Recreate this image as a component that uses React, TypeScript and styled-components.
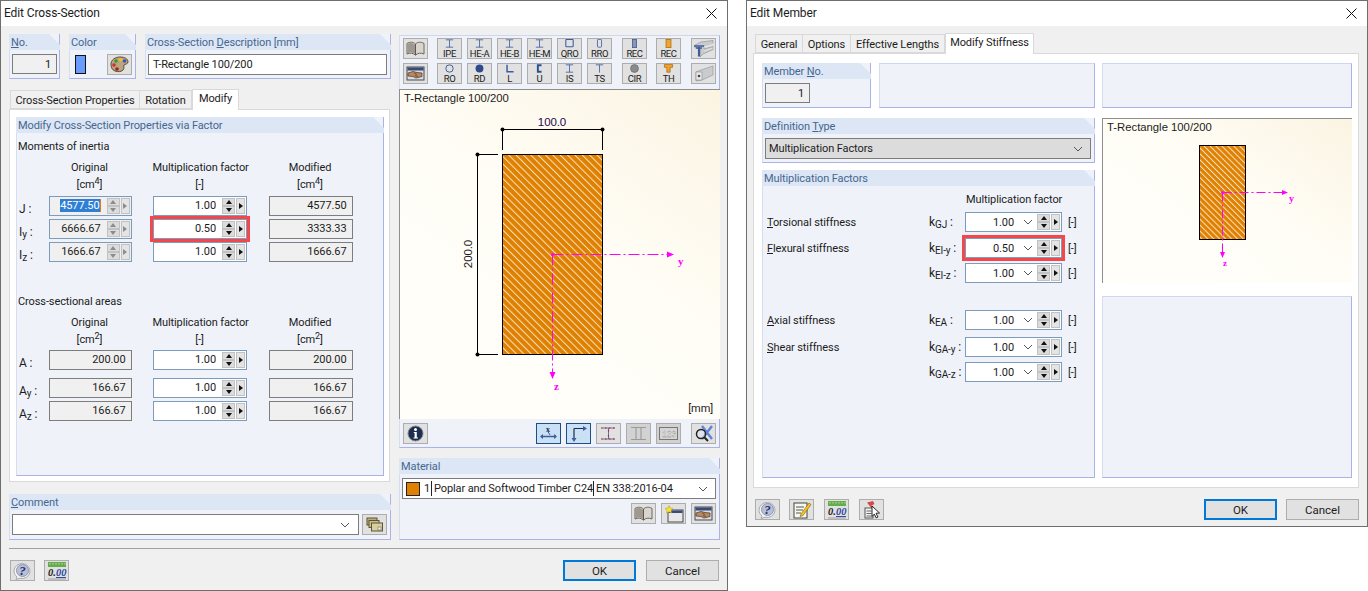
import React from 'react';
import styled, { createGlobalStyle } from 'styled-components';

const Global = createGlobalStyle`
  html, body { margin: 0; padding: 0; background: #fff; }
  * { box-sizing: border-box; }
  body { font-family: Roboto, "Liberation Sans", sans-serif; font-size: 11px; letter-spacing: -0.1px; color: #1c1c1c; }
`;

const Page = styled.div`
  display: flex;
  align-items: flex-start;
  gap: 18px;
  width: 1368px;
  height: 591px;
  overflow: hidden;
`;
const Win = styled.div<{ $w: number; $h: number }>`
  width: ${p => p.$w}px;
  height: ${p => p.$h}px;
  flex: none;
  border: 1px solid #6e6e6e;
  background: #f0f0f0;
  display: flex;
  flex-direction: column;
`;
const TitleBar = styled.div`
  height: 25px;
  flex: none;
  background: #fff;
  display: flex;
  align-items: center;
  justify-content: space-between;
  padding: 0 10px 1px 3px;
  font-size: 12px;
`;
const Body1 = styled.div`
  display: flex;
  gap: 8px;
  padding: 8px 0 0 8px;
`;
const LeftCol = styled.div`
  width: 382px;
  display: flex;
  flex-direction: column;
`;
const RightCol = styled.div`
  width: 321px;
  display: flex;
  flex-direction: column;
`;
const TopRow = styled.div`
  display: flex;
  gap: 9px;
  height: 45px;
`;
const Panel = styled.div<{ $w?: number; $h?: number; $mt?: number }>`
  ${p => (p.$w ? `width:${p.$w}px;flex:none;` : 'flex:1;')}
  ${p => (p.$h ? `height:${p.$h}px;flex:none;` : '')}
  ${p => (p.$mt ? `margin-top:${p.$mt}px;` : '')}
  display: flex;
  flex-direction: column;
  background: #eff3f9;
  border-right: 1px solid #a9b3e6;
  border-bottom: 1px solid #a9b3e6;
  border-left: 1px solid #d5deef;
`;
const BlankPanel = styled(Panel)`
  border-top: 1px solid #cdd7ee;
`;
const Head = styled.div`
  height: 16px;
  flex: none;
  margin: 0 -1px 0 -1px;
  padding: 0 0 0 2px;
  display: flex;
  align-items: center;
  background: #dce6f4;
  color: #466690;
  clip-path: polygon(0 0, calc(100% - 11px) 0, 100% 11px, 100% 100%, 0 100%);
  white-space: nowrap;
`;
const ReadBox = styled.div<{ $w: number; $h?: number; $ml?: number; $mt?: number }>`
  width: ${p => p.$w}px;
  height: ${p => p.$h ?? 20}px;
  margin: ${p => p.$mt ?? 4}px 0 0 ${p => p.$ml ?? 2}px;
  border: 1px solid #7d7d7d;
  background: #f0f0f0;
  display: flex;
  align-items: center;
  justify-content: flex-end;
  padding-right: 5px;
`;
const ColorRow = styled.div`
  display: flex;
  align-items: center;
  padding: 4px 0 0 5px;
`;
const Swatch = styled.div`
  width: 11px;
  height: 19px;
  background: #6a9bff;
  border: 1px solid #111;
`;
const IconBtn = styled.button<{ $on?: boolean; $ml?: number; $off?: boolean }>`
  width: 25px;
  height: 21px;
  flex: none;
  padding: 0;
  margin: 0 0 0 ${p => p.$ml ?? 0}px;
  border: 1px solid ${p => (p.$on ? '#1d4f85' : '#adadad')};
  background: ${p => (p.$on ? '#c9e0f5' : p.$off ? '#d2d2d2' : '#e1e1e1')};
  display: flex;
  align-items: center;
  justify-content: center;
  flex-direction: column;
  font-family: Roboto, sans-serif;
  color: #1c1c1c;
`;
const SecLabel = styled.span`
  font-size: 9.5px;
  line-height: 9px;
  letter-spacing: -0.4px;
  margin-top: 1px;
  white-space: nowrap;
`;
const TextBox = styled.div`
  height: 21px;
  margin: 4px 3px 0 2px;
  border: 1px solid #7d7d7d;
  background: #fff;
  display: flex;
  align-items: center;
  padding-left: 4px;
`;
const TabBar = styled.div<{ $pl: number; $mt: number }>`
  display: flex;
  align-items: flex-end;
  height: 20px;
  padding-left: ${p => p.$pl}px;
  margin-top: ${p => p.$mt}px;
  position: relative;
  z-index: 1;
  flex: none;
`;
const Tab = styled.div<{ $w: number; $on?: boolean }>`
  width: ${p => p.$w}px;
  height: ${p => (p.$on ? 21 : 19)}px;
  margin-bottom: ${p => (p.$on ? -1 : 0)}px;
  display: flex;
  align-items: center;
  justify-content: center;
  border: 1px solid #d9d9d9;
  border-bottom: ${p => (p.$on ? 'none' : '1px solid #d9d9d9')};
  border-left: ${p => (p.$on ? '1px solid #d9d9d9' : 'none')};
  background: ${p => (p.$on ? '#fff' : '#f0f0f0')};
  padding: ${p => (p.$on ? '0 0 3px' : '1px 0 0')};
  white-space: nowrap;
  &:first-child { border-left: 1px solid #d9d9d9; }
`;
const TabPage = styled.div<{ $h: number; $w?: number }>`
  height: ${p => p.$h}px;
  ${p => (p.$w ? `width:${p.$w}px;` : '')}
  background: #fff;
  border: 1px solid #d9d9d9;
  flex: none;
`;
const InnerPad1 = styled.div`
  padding: 7px 5px 0 6px;
  height: 100%;
`;
const SectionTitle = styled.div<{ $mt: number }>`
  margin: ${p => p.$mt}px 0 0 1px;
  height: 14px;
  line-height: 14px;
`;
const ColHeads = styled.div<{ $mt: number }>`
  display: grid;
  grid-template-columns: 83px 94px 84px;
  column-gap: 21.5px;
  padding-left: 31px;
  margin-top: ${p => p.$mt}px;
  text-align: center;
  line-height: 16.5px;
`;
const HeadCell = styled.div`
  white-space: nowrap;
`;
const Sup = styled.sup`
  font-size: 9px;
  line-height: 0;
  vertical-align: 4px;
`;
const Sub = styled.sub`
  font-size: 10px;
  line-height: 0;
  vertical-align: -2px;
`;
const PropRow = styled.div<{ $mt: number }>`
  display: grid;
  grid-template-columns: 8px 83px 94px 84px;
  column-gap: 21.5px;
  align-items: center;
  height: 20px;
  padding-left: 2px;
  margin-top: ${p => p.$mt}px;
`;
const RowLabel = styled.div`
  font-size: 12px;
  padding-top: 7px;
  white-space: nowrap;
`;
const Spin = styled.div<{ $w?: number; $grey?: boolean; $hot?: boolean }>`
  height: 20px;
  ${p => (p.$w ? `width:${p.$w}px;` : '')}
  border: 1px solid #7c9cbd;
  background: ${p => (p.$grey ? '#f0f0f0' : '#fff')};
  display: flex;
  align-items: center;
  padding-right: 1px;
  ${p => (p.$hot ? 'outline: 3px solid #f4474b; outline-offset: 0px;' : '')}
`;
const SpinValue = styled.div<{ $pr: number }>`
  flex: 1;
  text-align: right;
  padding-right: ${p => p.$pr}px;
  white-space: nowrap;
`;
const Selected = styled.span`
  background: #2f7fd6;
  color: #fff;
  border-right: 1px solid #e07b20;
`;
const Stack = styled.div`
  width: 13px;
  height: 16px;
  display: flex;
  flex-direction: column;
  flex: none;
`;
const Step = styled.div<{ $dis?: boolean }>`
  flex: 1;
  background: #dcdcdc;
  border: 1px solid #c2c2c2;
  display: flex;
  align-items: center;
  justify-content: center;
  &::after {
    content: '';
    border-left: 3.5px solid transparent;
    border-right: 3.5px solid transparent;
  }
`;
const StepUp = styled(Step)`
  &::after { border-bottom: 4px solid ${p => (p.$dis ? '#8c8c8c' : '#111')}; }
`;
const StepDown = styled(Step)`
  &::after { border-top: 4px solid ${p => (p.$dis ? '#8c8c8c' : '#111')}; }
`;
const Go = styled.div<{ $dis?: boolean }>`
  width: 9px;
  height: 16px;
  margin-left: 1px;
  flex: none;
  background: #e4e4e4;
  border: 1px solid #c2c2c2;
  display: flex;
  align-items: center;
  justify-content: center;
  &::after {
    content: '';
    border-top: 3px solid transparent;
    border-bottom: 3px solid transparent;
    border-left: 4px solid ${p => (p.$dis ? '#8c8c8c' : '#111')};
  }
`;
const Chevron = styled.svg`
  flex: none;
  margin-right: 4px;
`;
const ChevronIcon = ({ w = 10 }: { w?: number }) => (
  <Chevron width={w} height="6" viewBox="0 0 10 6">
    <path d="M1 1l4 4 4-4" fill="none" stroke="#555" strokeWidth="1" />
  </Chevron>
);
const ValBox = styled.div`
  height: 20px;
  border: 1px solid #7d7d7d;
  background: #f0f0f0;
  display: flex;
  align-items: center;
  justify-content: flex-end;
  padding-right: 5px;
`;

const Toolbar = styled.div`
  height: 54px;
  margin-top: 1px;
  flex: none;
  background: #eff3f9;
  border-top: 1px solid #cdd7ee;
  border-right: 1px solid #a9b3e6;
  border-left: 1px solid #d5deef;
  padding: 2px 0 0 3px;
  display: flex;
  flex-direction: column;
  gap: 4px;
`;
const ToolRow = styled.div`
  display: flex;
`;
const PreviewBox = styled.div<{ $h: number; $mt?: number }>`
  height: ${p => p.$h}px;
  margin-top: ${p => p.$mt ?? 0}px;
  flex: none;
  display: grid;
  border-top: 1px solid #8e8e8e;
  border-left: 1px solid #8e8e8e;
  background: linear-gradient(215deg, #fbf4e2 0%, #fffdf6 45%, #fffef9 100%);
  & > * { grid-area: 1 / 1; }
`;
const PreviewTitle = styled.div`
  font-size: 11.3px;
  letter-spacing: 0;
  padding: 2px 0 0 4px;
  font-family: "Liberation Sans", sans-serif;
  align-self: start;
`;
const Unit = styled.div`
  justify-self: end;
  align-self: end;
  padding: 0 7px 4px 0;
`;
const Bottombar = styled.div`
  height: 29px;
  flex: none;
  background: #eff3f9;
  border-right: 1px solid #a9b3e6;
  border-bottom: 1px solid #a9b3e6;
  border-left: 1px solid #d5deef;
  display: flex;
  align-items: center;
  padding-left: 3px;
`;
const Select = styled.div<{ $grey?: boolean }>`
  height: 21px;
  margin: 4px 3px 0 2px;
  border: 1px solid #7d7d7d;
  background: ${p => (p.$grey ? '#dcdcdc' : '#fff')};
  display: flex;
  align-items: center;
  padding: 0 3px 0 3px;
`;
const MatSwatch = styled.div`
  width: 14px;
  height: 14px;
  background: #e08000;
  border: 1px solid #222;
  flex: none;
`;
const Cell = styled.div<{ $w: number; $bar?: boolean; $right?: boolean }>`
  width: ${p => p.$w}px;
  flex: none;
  ${p => (p.$bar ? 'border-right: 1px solid #222;' : '')}
  ${p => (p.$right ? 'text-align:right;padding-right:1px;' : 'padding-left:2px;')}
  white-space: nowrap;
  line-height: 15px;
`;
const Grow = styled.div`
  flex: 1;
`;
const MatBtns = styled.div`
  display: flex;
  justify-content: flex-end;
  gap: 5px;
  padding: 4px 3px 0 0;
`;
const CommentRow = styled.div`
  display: flex;
  gap: 3px;
  margin: 4px 3px 0 2px;
`;
const CommentBox = styled(Select)`
  flex: 1;
  margin: 0;
  justify-content: flex-end;
  padding-right: 4px;
`;
const Sep = styled.div<{ $w: number }>`
  height: 1px;
  width: ${p => p.$w}px;
  margin: 8px 0 0 8px;
  background: #a0a0a0;
`;
const Footer = styled.div<{ $mt: number; $pl: number; $pr: number }>`
  display: flex;
  align-items: center;
  margin-top: ${p => p.$mt}px;
  padding: 0 ${p => p.$pr}px 0 ${p => p.$pl}px;
`;
const Gap = styled.div`
  flex: 1;
`;
const DlgBtn = styled.button<{ $def?: boolean; $ml?: number }>`
  width: 73px;
  height: 21px;
  padding: 0;
  margin-left: ${p => p.$ml ?? 0}px;
  font-family: inherit;
  font-size: 11.5px;
  color: #1c1c1c;
  background: #e1e1e1;
  border: ${p => (p.$def ? '2px solid #0078d7' : '1px solid #adadad')};
`;
const Body2 = styled.div`
  padding: 7px 0 0 6px;
  display: flex;
  flex-direction: column;
`;
const Inner2 = styled.div`
  display: flex;
  gap: 7px;
  padding: 9px 0 0 8px;
`;
const Col2 = styled.div<{ $w: number }>`
  width: ${p => p.$w}px;
  flex: none;
  display: flex;
  flex-direction: column;
`;
const Row2 = styled.div`
  display: flex;
  gap: 8px;
  height: 45px;
  flex: none;
`;
const FactorHead = styled.div`
  height: 14px;
  margin: 7px 0 0 203px;
  line-height: 14px;
  white-space: nowrap;
`;
const StiffRow = styled.div<{ $mt: number }>`
  display: grid;
  grid-template-columns: 162px 36px 97px auto;
  align-items: center;
  height: 20px;
  margin-top: ${p => p.$mt}px;
  padding-left: 4px;
`;
const KLabel = styled.div`
  font-size: 12px;
  white-space: nowrap;
`;
const Unit2 = styled.div`
  padding-left: 6px;
`;

const Close = () => (
  <svg width="11" height="11" viewBox="0 0 11 11">
    <path d="M.5.5l10 10M10.5.5l-10 10" stroke="#111" strokeWidth="1" />
  </svg>
);

const Book = () => (
  <svg width="19" height="15" viewBox="0 0 19 15">
    <path d="M1 2.500C4 .5 7.500 1 9.500 3c2-2 5.500-2.500 8.500-.5V13c-3-1.500-6.500-1-8.500 1.200C7.500 12 4 11.500 1 13z" fill="#d9d5cd" stroke="#6d675f" />
    <path d="M1.500 3C4 1.500 6.800 2 9 3.800V13C7 11.500 4 11 1.500 12.300z" fill="#9f9890" />
    <path d="M9.500 3v11" stroke="#5d574f" />
  </svg>
);
const HandWin = () => (
  <svg width="19" height="15" viewBox="0 0 19 15">
    <rect x="1" y="1" width="17" height="13" fill="#d7dce6" stroke="#4a4a4a" />
    <rect x="1.500" y="1.500" width="16" height="3" fill="#384a78" />
    <path d="M2 7l5-1.500 4 1 5 .5v3.500l-6 1.500-3-1.500-5-.5z" fill="#b98a5f" stroke="#4b3520" strokeWidth=".7" />
    <path d="M8 7l3 1.500M9 9.500l3 1" stroke="#4b3520" strokeWidth=".7" />
  </svg>
);
const Palette = () => (
  <svg width="21" height="17" viewBox="0 0 21 17">
    <path d="M2 8c0-4 4-7 9-7s8 2 8 5c0 2-3 2-4 3s1 3-1 5-5 2-8 1-4-4-4-7z" fill="#b9a581" stroke="#5e4b32" />
    <circle cx="7" cy="5" r="1.800" fill="#2d9c3a" />
    <circle cx="11.500" cy="3.800" r="1.800" fill="#f0c020" />
    <circle cx="15.500" cy="5" r="1.800" fill="#3a55c0" />
    <circle cx="5" cy="9" r="1.800" fill="#d03030" />
    <circle cx="8" cy="13" r="1.800" fill="#a02020" />
  </svg>
);
const Help = () => (
  <svg width="20" height="18" viewBox="0 0 20 18">
    <path d="M4 15c-2-2-3-3.500-3-6a8 7.500 0 1 1 6 7.300L3 17.500z" fill="#f4f4f6" stroke="#a8a8b0" />
    <circle cx="9.500" cy="8.500" r="6" fill="#b9bfd6" stroke="#8f96b4" />
    <text x="9.500" y="13" textAnchor="middle" fontFamily="Liberation Serif" fontStyle="italic" fontWeight="700" fontSize="13" fill="#232f6b">?</text>
  </svg>
);
const Zero = () => (
  <svg width="20" height="18" viewBox="0 0 20 18">
    <rect x="1" y="0" width="18" height="5" fill="#64ad4a" />
    <path d="M3 1v1.500M6 1v1.500M9 1v1.500M12 1v1.500M15 1v1.500M18 1v1.500" stroke="#d4ecc5" strokeWidth=".8" />
    <text x="1" y="13.500" fontFamily="Liberation Serif" fontStyle="italic" fontWeight="700" fontSize="10.500" fill="#222">0.<tspan fill="#3148a0">00</tspan></text>
    <path d="M9 15.500h10" stroke="#3148a0" />
    <path d="M1 17h18" stroke="#8a8a8a" strokeWidth=".8" />
  </svg>
);
const Info = () => (
  <svg width="17" height="17" viewBox="0 0 17 17">
    <circle cx="8.500" cy="8.500" r="7.500" fill="#1d2d4d" stroke="#7d8798" />
    <circle cx="8.500" cy="4.500" r="1.500" fill="#fff" />
    <path d="M6.800 7h3v5.500h1.200v1H6.500v-1h1.100V8H6.800z" fill="#fff" />
  </svg>
);
const Section = ({ k }: { k: string }) => {
  const blue = '#3f5c9c';
  const draw: Record<string, React.ReactNode> = {
    i: <path d="M3 1h9M7.500 1v9M3 10h9" stroke={blue} fill="none" />,
    qro: <rect x="3" y=".5" width="9" height="9" stroke={blue} strokeWidth="1.300" fill="none" rx="1" />,
    rro: <rect x="5" y=".5" width="5" height="9.500" stroke={blue} fill="none" rx="1" />,
    recg: <rect x="5" y=".5" width="5" height="10" stroke={blue} fill="#8d95ad" />,
    reco: <rect x="4.500" y=".5" width="6" height="10" stroke="#b07010" fill="#f3a22e" />,
    ro: <circle cx="7.500" cy="5.500" r="4.500" stroke={blue} strokeWidth="1.200" fill="none" />,
    rd: <circle cx="7.500" cy="5.500" r="4.800" fill="#2f4a8c" />,
    l: <path d="M4.500 1v8.500h8" stroke={blue} strokeWidth="1.800" fill="none" />,
    u: <path d="M10 1.500H5.500v8H10" stroke="#30508c" strokeWidth="2.400" fill="none" />,
    t: <path d="M3 1h9M7.500 1v9.500" stroke={blue} fill="none" />,
    cir: <circle cx="7.500" cy="5.500" r="4.800" fill="#8b8b8b" stroke="#6f6f6f" />,
    th: <path d="M2.500.5h10v3.500H9.500v6h-4V4H2.500z" fill="#f3a22e" stroke="#b07010" />,
  };
  return <svg width="15" height="11" viewBox="0 0 15 11">{draw[k]}</svg>;
};
const Beam3D = () => (
  <svg width="21" height="18" viewBox="0 0 21 18">
    <path d="M2 5L8 2 20 .5v3L11 6v3l9-2.500v3L10 14l-3 3V8L2 8z" fill="#c9cbce" stroke="#8a8a8a" strokeWidth=".6" />
    <path d="M11 6.500l9-3M11 11l9-3" stroke="#eeeeee" strokeWidth=".7" />
    <path d="M1 6h10M3 8h6" stroke="#3f5c9c" strokeWidth="1.500" />
    <path d="M6 7v9.500" stroke="#3f5c9c" strokeWidth="2.200" />
  </svg>
);
const Box3D = () => (
  <svg width="20" height="17" viewBox="0 0 20 17">
    <path d="M2 7l5-2 12-4v9L8 15l-6 1z" fill="#c9cbce" stroke="#909090" strokeWidth=".6" />
    <rect x="2" y="7" width="6" height="8" fill="#e8e8ea" stroke="#8a8a8a" strokeWidth=".6" />
    <circle cx="5" cy="11" r="1.300" fill="#444" />
  </svg>
);
const AxisX = () => (
  <svg width="19" height="16" viewBox="0 0 19 16">
    <text x="7" y="7" fontFamily="Liberation Serif" fontSize="8" fontWeight="700" fill="#1d2d4d">x</text>
    <path d="M2 11.500h15" stroke="#3f5c9c" strokeWidth="1.500" />
    <path d="M1 11.500l3-2.500v5zM18 11.500l-3-2.500v5z" fill="#3f5c9c" />
    <path d="M8 5l3 5" stroke="#3f5c9c" />
  </svg>
);
const AxisYZ = () => (
  <svg width="19" height="17" viewBox="0 0 19 17">
    <path d="M5 3.500h10M5 3.500V14" stroke="#1d2d4d" strokeWidth="1.200" fill="none" />
    <path d="M18 3.500l-4-2.500v5zM5 17l-2.500-4h5z" fill="#3f5c9c" />
  </svg>
);
const Dots = () => (
  <svg width="17" height="15" viewBox="0 0 17 15">
    <path d="M2 2h13M8.500 2v11M2 13h13" stroke="#3d5590" strokeWidth=".8" />
    <path d="M1 2h15M1 13h15M8.500 4v2M8.500 9v2" stroke="#d01818" strokeWidth="1.200" strokeDasharray="1.500 2.500" />
  </svg>
);
const ISilent = () => (
  <svg width="17" height="15" viewBox="0 0 17 15">
    <path d="M1 1.500h15M1 13.500h15M6 2v11M11 2v11" stroke="#9a9a9a" strokeWidth="1.100" />
  </svg>
);
const Num123 = () => (
  <svg width="19" height="13" viewBox="0 0 19 13">
    <rect x=".5" y=".5" width="18" height="12" fill="#d5d5d5" stroke="#777" />
    <text x="3" y="10" fontFamily="Liberation Sans" fontSize="8.500" fill="#fff" stroke="#888" strokeWidth=".3">123</text>
  </svg>
);
const MagnifyX = () => (
  <svg width="20" height="17" viewBox="0 0 20 17">
    <path d="M8 1l10 13M18 1L8 14" stroke="#5d83d8" strokeWidth="2.400" />
    <circle cx="7" cy="9" r="4.500" fill="#dfe6ee" fillOpacity=".6" stroke="#222" strokeWidth="1.500" />
    <path d="M10.500 12.500L14 16" stroke="#222" strokeWidth="2" />
  </svg>
);
const NewWin = () => (
  <svg width="20" height="18" viewBox="0 0 20 18">
    <rect x="4" y="5" width="15" height="12" fill="#e8e8ea" stroke="#4a4a4a" />
    <rect x="4.500" y="5.500" width="14" height="2.500" fill="#3a4c7c" />
    <path d="M5 .5l1.200 2.600L9 3.400 7 5.300l.5 2.700L5 6.700 2.500 8 3 5.300 1 3.400l2.800-.3z" fill="#f5e23a" stroke="#b89c10" strokeWidth=".5" />
  </svg>
);
const Stack3 = () => (
  <svg width="17" height="15" viewBox="0 0 17 15">
    <rect x="1" y="1" width="10" height="7" fill="#b8ae7e" stroke="#5c5434" />
    <rect x="3" y="3.500" width="10" height="7" fill="#c9bf8c" stroke="#5c5434" />
    <rect x="5.500" y="6" width="11" height="8" fill="#d8cf9f" stroke="#5c5434" />
    <rect x="12" y="10" width="3" height="3" fill="#f4f4f4" stroke="#555" strokeWidth=".5" />
  </svg>
);
const Notepad = () => (
  <svg width="20" height="18" viewBox="0 0 20 18">
    <rect x="2" y="2" width="13" height="15" fill="#f7f7ef" stroke="#444" />
    <path d="M4 6h8M4 9h7M4 12h5" stroke="#555" />
    <path d="M9 13l8-11 2 1.500-8 11-3 1z" fill="#f4c820" stroke="#7a5c08" strokeWidth=".6" />
  </svg>
);
const Pick = () => (
  <svg width="20" height="19" viewBox="0 0 20 19">
    <rect x="3" y="8" width="8" height="10" fill="#f3f3f3" stroke="#555" />
    <path d="M4.500 11h5M4.500 13.500h5M4.500 16h5" stroke="#666" />
    <path d="M5 2.500l6-1.500 1.500 3-3 1.500 1 2-1 .5-3-3.500z" fill="#d84848" />
    <path d="M10 6l7.500 7-3.500.3 2 3.700-1.800.9-1.900-3.800-2.300 2.400z" fill="#fff" stroke="#111" strokeWidth=".9" />
  </svg>
);

const Steppers = ({ dis }: { dis?: boolean }) => (
  <>
    <Stack>
      <StepUp $dis={dis} />
      <StepDown $dis={dis} />
    </Stack>
    <Go $dis={dis} />
  </>
);

const Original = ({ v, sel }: { v: string; sel?: boolean }) => (
  <Spin $grey>
    <SpinValue $pr={6}>{sel ? <Selected>{v}</Selected> : v}</SpinValue>
    <Steppers dis />
  </Spin>
);
const Factor = ({ v, hot }: { v: string; hot?: boolean }) => (
  <Spin $hot={hot}>
    <SpinValue $pr={6}>{v}</SpinValue>
    <Steppers />
  </Spin>
);
const Factor2 = ({ v, hot }: { v: string; hot?: boolean }) => (
  <Spin $hot={hot}>
    <SpinValue $pr={9}>{v}</SpinValue>
    <ChevronIcon />
    <Steppers />
  </Spin>
);

const hatchDefs = (id: string, gap: number) => (
  <pattern id={id} width={gap} height={gap} patternUnits="userSpaceOnUse" patternTransform="rotate(-45)">
    <rect width={gap} height={gap} fill="#e08000" />
    <rect width="1" height={gap} fill="#f8e3c2" />
  </pattern>
);

const Arrow = ({ d }: { d: string }) => <path d={d} fill="#ff00ff" />;

const BigDrawing = () => (
  <svg width="319" height="329" viewBox="400 90 319 329" fontFamily="Liberation Sans">
    <defs>{hatchDefs('hb', 5.2)}</defs>
    <rect x="502.500" y="154.500" width="100" height="200" fill="url(#hb)" stroke="#000" />
    <path d="M502.500 150V129.500H602.500V150M498 154.500H477.500V354.500H498" fill="none" stroke="#000" />
    <g fill="#000">
      <circle cx="502.500" cy="129.500" r="2" /><circle cx="602.500" cy="129.500" r="2" />
      <circle cx="477.500" cy="154.500" r="2" /><circle cx="477.500" cy="354.500" r="2" />
    </g>
    <text x="552" y="126" textAnchor="middle" fontSize="11.500" fill="#220a50">100.0</text>
    <text transform="translate(472 254) rotate(-90)" textAnchor="middle" fontSize="11.500" fill="#1a1a1a">200.0</text>
    <path d="M552.500 254.500H668M552.500 254.500V372" stroke="#ff00ff" strokeWidth="1" strokeDasharray="11 3 2 3" fill="none" />
    <circle cx="552.500" cy="254.500" r="1.500" fill="#ff00ff" />
    <Arrow d="M674 254.500l-7-3v6zM552.500 379l-3-7h6z" />
    <text x="678" y="265" fontFamily="Liberation Serif" fontWeight="700" fontSize="11" fill="#ff00ff">y</text>
    <text x="554" y="390" fontFamily="Liberation Serif" fontWeight="700" fontSize="11" fill="#ff00ff">z</text>
  </svg>
);
const SmallDrawing = () => (
  <svg width="249" height="164" viewBox="1103 119 249 164" fontFamily="Liberation Serif">
    <defs>{hatchDefs('hs', 4.2)}</defs>
    <rect x="1199.500" y="145.500" width="46" height="94" fill="url(#hs)" stroke="#000" />
    <path d="M1222.500 192.500H1284M1222.500 192.500V253" stroke="#ff00ff" strokeDasharray="9 3 2 3" fill="none" />
    <circle cx="1222.500" cy="192.500" r="1.500" fill="#ff00ff" />
    <Arrow d="M1288 192.500l-6-2.500v5zM1222.500 258l-2.500-6h5z" />
    <text x="1289" y="202" fontWeight="700" fontSize="10" fill="#ff00ff">y</text>
    <text x="1223" y="266" fontWeight="700" fontSize="9" fill="#ff00ff">z</text>
  </svg>
);

const row1 = [['i', 'IPE'], ['i', 'HE-A'], ['i', 'HE-B'], ['i', 'HE-M'], ['qro', 'QRO'], ['rro', 'RRO']];
const row2 = [['ro', 'RO'], ['rd', 'RD'], ['l', 'L'], ['u', 'U'], ['i', 'IS'], ['t', 'TS']];

const SecBtn = ({ k, t, ml }: { k: string; t: string; ml: number }) => (
  <IconBtn $ml={ml}>
    <Section k={k} />
    <SecLabel>{t}</SecLabel>
  </IconBtn>
);

export default function App() {
  return (
    <Page>
      <Global />
      <Win $w={728} $h={591}>
        <TitleBar>
          <span>Edit Cross-Section</span>
          <Close />
        </TitleBar>
        <Body1>
          <LeftCol>
            <TopRow>
              <Panel $w={51}>
                <Head><span><u>N</u>o.</span></Head>
                <ReadBox $w={45}>1</ReadBox>
              </Panel>
              <Panel $w={67}>
                <Head>Color</Head>
                <ColorRow>
                  <Swatch />
                  <IconBtn $ml={21}><Palette /></IconBtn>
                </ColorRow>
              </Panel>
              <Panel>
                <Head><span>Cross-Section <u>D</u>escription [mm]</span></Head>
                <TextBox>T-Rectangle 100/200</TextBox>
              </Panel>
            </TopRow>
            <TabBar $pl={1} $mt={10}>
              <Tab $w={130}>Cross-Section Properties</Tab>
              <Tab $w={52}>Rotation</Tab>
              <Tab $w={47} $on>Modify</Tab>
            </TabBar>
            <TabPage $h={373} $w={381}>
              <InnerPad1>
                <Panel $h={359}>
                  <Head>Modify Cross-Section Properties via Factor</Head>
                  <SectionTitle $mt={7}>Moments of inertia</SectionTitle>
                  <ColHeads $mt={6}>
                    <HeadCell>Original<br />[cm<Sup>4</Sup>]</HeadCell>
                    <HeadCell>Multiplication factor<br />[-]</HeadCell>
                    <HeadCell>Modified<br />[cm<Sup>4</Sup>]</HeadCell>
                  </ColHeads>
                  <PropRow $mt={2}>
                    <RowLabel>J :</RowLabel>
                    <Original v="4577.50" sel />
                    <Factor v="1.00" />
                    <ValBox>4577.50</ValBox>
                  </PropRow>
                  <PropRow $mt={3}>
                    <RowLabel>I<Sub>y</Sub> :</RowLabel>
                    <Original v="6666.67" />
                    <Factor v="0.50" hot />
                    <ValBox>3333.33</ValBox>
                  </PropRow>
                  <PropRow $mt={3}>
                    <RowLabel>I<Sub>z</Sub> :</RowLabel>
                    <Original v="1666.67" />
                    <Factor v="1.00" />
                    <ValBox>1666.67</ValBox>
                  </PropRow>
                  <SectionTitle $mt={34}>Cross-sectional areas</SectionTitle>
                  <ColHeads $mt={6}>
                    <HeadCell>Original<br />[cm<Sup>2</Sup>]</HeadCell>
                    <HeadCell>Multiplication factor<br />[-]</HeadCell>
                    <HeadCell>Modified<br />[cm<Sup>2</Sup>]</HeadCell>
                  </ColHeads>
                  <PropRow $mt={1}>
                    <RowLabel>A :</RowLabel>
                    <ValBox>200.00</ValBox>
                    <Factor v="1.00" />
                    <ValBox>200.00</ValBox>
                  </PropRow>
                  <PropRow $mt={8}>
                    <RowLabel>A<Sub>y</Sub> :</RowLabel>
                    <ValBox>166.67</ValBox>
                    <Factor v="1.00" />
                    <ValBox>166.67</ValBox>
                  </PropRow>
                  <PropRow $mt={3}>
                    <RowLabel>A<Sub>z</Sub> :</RowLabel>
                    <ValBox>166.67</ValBox>
                    <Factor v="1.00" />
                    <ValBox>166.67</ValBox>
                  </PropRow>
                </Panel>
              </InnerPad1>
            </TabPage>
            <Panel $h={46} $mt={12}>
              <Head><span><u>C</u>omment</span></Head>
              <CommentRow>
                <CommentBox><ChevronIcon /></CommentBox>
                <IconBtn><Stack3 /></IconBtn>
              </CommentRow>
            </Panel>
          </LeftCol>
          <RightCol>
            <Toolbar>
              <ToolRow>
                <IconBtn><Book /></IconBtn>
                {row1.map(([k, t], i) => <SecBtn key={t} k={k} t={t} ml={i === 0 ? 9 : 5} />)}
                <SecBtn k="recg" t="REC" ml={10} />
                <SecBtn k="reco" t="REC" ml={9} />
                <IconBtn $ml={10}><Beam3D /></IconBtn>
              </ToolRow>
              <ToolRow>
                <IconBtn><HandWin /></IconBtn>
                {row2.map(([k, t], i) => <SecBtn key={t} k={k} t={t} ml={i === 0 ? 9 : 5} />)}
                <SecBtn k="cir" t="CIR" ml={10} />
                <SecBtn k="th" t="TH" ml={9} />
                <IconBtn $ml={10}><Box3D /></IconBtn>
              </ToolRow>
            </Toolbar>
            <PreviewBox $h={330}>
              <PreviewTitle>T-Rectangle 100/200</PreviewTitle>
              <BigDrawing />
              <Unit>[mm]</Unit>
            </PreviewBox>
            <Bottombar>
              <IconBtn><Info /></IconBtn>
              <IconBtn $on $ml={108}><AxisX /></IconBtn>
              <IconBtn $on $ml={5}><AxisYZ /></IconBtn>
              <IconBtn $ml={5}><Dots /></IconBtn>
              <IconBtn $off $ml={5}><ISilent /></IconBtn>
              <IconBtn $off $ml={5}><Num123 /></IconBtn>
              <IconBtn $ml={10}><MagnifyX /></IconBtn>
            </Bottombar>
            <Panel $h={82} $mt={10}>
              <Head>Material</Head>
              <Select>
                <MatSwatch />
                <Cell $w={12} $bar $right>1</Cell>
                <Cell $w={162} $bar>Poplar and Softwood Timber C24</Cell>
                <Cell $w={100}>EN 338:2016-04</Cell>
                <Grow />
                <ChevronIcon />
              </Select>
              <MatBtns>
                <IconBtn><Book /></IconBtn>
                <IconBtn><NewWin /></IconBtn>
                <IconBtn><HandWin /></IconBtn>
              </MatBtns>
            </Panel>
          </RightCol>
        </Body1>
        <Sep $w={711} />
        <Footer $mt={11} $pl={9} $pr={8}>
          <IconBtn><Help /></IconBtn>
          <IconBtn $ml={9}><Zero /></IconBtn>
          <Gap />
          <DlgBtn $def>OK</DlgBtn>
          <DlgBtn $ml={10}>Cancel</DlgBtn>
        </Footer>
      </Win>
      <Win $w={622} $h={527}>
        <TitleBar>
          <span>Edit Member</span>
          <Close />
        </TitleBar>
        <Body2>
          <TabBar $pl={2} $mt={0}>
            <Tab $w={48}>General</Tab>
            <Tab $w={48}>Options</Tab>
            <Tab $w={94}>Effective Lengths</Tab>
            <Tab $w={89} $on>Modify Stiffness</Tab>
          </TabBar>
          <TabPage $h={435} $w={606}>
            <Inner2>
              <Col2 $w={333}>
                <Row2>
                  <Panel $w={109}>
                    <Head><span>Member <u>N</u>o.</span></Head>
                    <ReadBox $w={45}>1</ReadBox>
                  </Panel>
                  <BlankPanel />
                </Row2>
                <Panel $h={45} $mt={10}>
                  <Head><span>Definition <u>T</u>ype</span></Head>
                  <Select $grey>Multiplication Factors<Grow /><ChevronIcon /></Select>
                </Panel>
                <Panel $h={308} $mt={7}>
                  <Head>Multiplication Factors</Head>
                  <FactorHead>Multiplication factor</FactorHead>
                  <StiffRow $mt={5}>
                    <span><u>T</u>orsional stiffness</span>
                    <KLabel>k<Sub>GJ</Sub> :</KLabel>
                    <Factor2 v="1.00" />
                    <Unit2>[-]</Unit2>
                  </StiffRow>
                  <StiffRow $mt={6}>
                    <span><u>F</u>lexural stiffness</span>
                    <KLabel>k<Sub>EI-y</Sub> :</KLabel>
                    <Factor2 v="0.50" hot />
                    <Unit2>[-]</Unit2>
                  </StiffRow>
                  <StiffRow $mt={5}>
                    <span />
                    <KLabel>k<Sub>EI-z</Sub> :</KLabel>
                    <Factor2 v="1.00" />
                    <Unit2>[-]</Unit2>
                  </StiffRow>
                  <StiffRow $mt={27}>
                    <span><u>A</u>xial stiffness</span>
                    <KLabel>k<Sub>EA</Sub> :</KLabel>
                    <Factor2 v="1.00" />
                    <Unit2>[-]</Unit2>
                  </StiffRow>
                  <StiffRow $mt={7}>
                    <span><u>S</u>hear stiffness</span>
                    <KLabel>k<Sub>GA-y</Sub> :</KLabel>
                    <Factor2 v="1.00" />
                    <Unit2>[-]</Unit2>
                  </StiffRow>
                  <StiffRow $mt={5}>
                    <span />
                    <KLabel>k<Sub>GA-z</Sub> :</KLabel>
                    <Factor2 v="1.00" />
                    <Unit2>[-]</Unit2>
                  </StiffRow>
                </Panel>
              </Col2>
              <Col2 $w={250}>
                <BlankPanel $h={45} />
                <PreviewBox $h={165} $mt={10}>
                  <PreviewTitle>T-Rectangle 100/200</PreviewTitle>
                  <SmallDrawing />
                </PreviewBox>
                <BlankPanel $h={182} $mt={13} />
              </Col2>
            </Inner2>
          </TabPage>
        </Body2>
        <Footer $mt={11} $pl={8} $pr={8}>
          <IconBtn><Help /></IconBtn>
          <IconBtn $ml={9}><Notepad /></IconBtn>
          <IconBtn $ml={10}><Zero /></IconBtn>
          <IconBtn $ml={10}><Pick /></IconBtn>
          <Gap />
          <DlgBtn $def>OK</DlgBtn>
          <DlgBtn $ml={9}>Cancel</DlgBtn>
        </Footer>
      </Win>
    </Page>
  );
}
